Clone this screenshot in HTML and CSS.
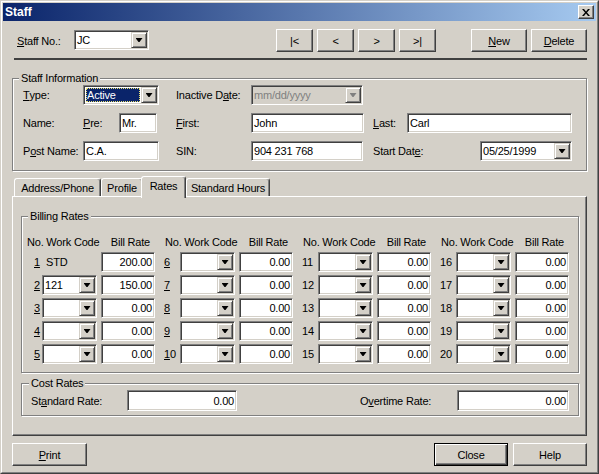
FILE: index.html
```html
<!DOCTYPE html>
<html lang="en">
<head>
    <meta charset="UTF-8">
    <title>Staff</title>
    <link rel="stylesheet" href="styles.css">
</head>
<body>

<div class="window">
  <div class="window-inner">
    <div class="titlebar">
        <span class="title">Staff</span>
        <span class="close-btn">
            <svg width="8" height="7" viewBox="0 0 8 7"><path d="M0 0h2l2 2.4L6 0h2L5 3.5 8 7H6L4 4.6 2 7H0l3-3.5z" fill="#000"/></svg>
        </span>
    </div>

    <div class="client">
        <!-- staff selector + navigation -->
        <div class="toolbar">
            <span class="toolbar-label"><u>S</u>taff No.:</span>
            <div class="combo staff-combo"><span class="combo-text">JC</span><span class="drop"></span></div>
            <div class="nav">
                <button class="btn nav-btn">|&lt;</button>
                <button class="btn nav-btn">&lt;</button>
                <button class="btn nav-btn">&gt;</button>
                <button class="btn nav-btn">&gt;|</button>
            </div>
            <button class="btn wide-btn"><u>N</u>ew</button>
            <button class="btn wide-btn delete-btn"><u>D</u>elete</button>
        </div>
        <div class="separator"></div>

        <fieldset class="group info">
            <legend>Staff Information</legend>
            <div class="info-grid">
                <span class="lbl col1"><u>T</u>ype:</span>
                <div class="combo focused span2"><span class="combo-text">Active</span><span class="drop"></span></div>
                <span class="lbl col5">Inactive D<u>a</u>te:</span>
                <div class="combo disabled w112"><span class="combo-text">mm/dd/yyyy</span><span class="drop"></span></div>

                <span class="lbl col1">Name:</span>
                <span class="lbl"><u>P</u>re:</span>
                <span class="field w38">Mr.</span>
                <span class="lbl col5"><u>F</u>irst:</span>
                <span class="field">John</span>
                <span class="lbl col8"><u>L</u>ast:</span>
                <span class="field span2">Carl</span>

                <span class="lbl col1">P<u>o</u>st Name:</span>
                <span class="field span2">C.A.</span>
                <span class="lbl col5">SIN:</span>
                <span class="field w112">904 231 768</span>
                <span class="lbl col8 span2">Start Dat<u>e</u>:</span>
                <div class="combo"><span class="combo-text">05/25/1999</span><span class="drop"></span></div>
            </div>
        </fieldset>

        <div class="tabs">
            <span class="tab tab-address">Address/Phone</span>
            <span class="tab tab-profile">Profile</span>
            <span class="tab tab-rates active">Rates</span>
            <span class="tab tab-hours">Standard Hours</span>
        </div>
        <div class="tab-panel">
            <fieldset class="group billing">
                <legend>Billing Rates</legend>
                <div class="rates">
                    <div class="rate-col first">
                        <span class="rate-head">No. Work Code</span>
                        <span class="rate-head bill-head">Bill Rate</span>
                        <span class="num"><u>1</u></span><span class="code-text">STD</span><span class="field bill">200.00</span>
                        <span class="num"><u>2</u></span><div class="combo"><span class="combo-text">121</span><span class="drop"></span></div><span class="field bill">150.00</span>
                        <span class="num"><u>3</u></span><div class="combo"><span class="combo-text"></span><span class="drop"></span></div><span class="field bill">0.00</span>
                        <span class="num"><u>4</u></span><div class="combo"><span class="combo-text"></span><span class="drop"></span></div><span class="field bill">0.00</span>
                        <span class="num"><u>5</u></span><div class="combo"><span class="combo-text"></span><span class="drop"></span></div><span class="field bill">0.00</span>
                    </div>
                    <div class="rate-col">
                        <span class="rate-head">No. Work Code</span>
                        <span class="rate-head bill-head">Bill Rate</span>
                        <span class="num"><u>6</u></span><div class="combo"><span class="combo-text"></span><span class="drop"></span></div><span class="field bill">0.00</span>
                        <span class="num"><u>7</u></span><div class="combo"><span class="combo-text"></span><span class="drop"></span></div><span class="field bill">0.00</span>
                        <span class="num"><u>8</u></span><div class="combo"><span class="combo-text"></span><span class="drop"></span></div><span class="field bill">0.00</span>
                        <span class="num"><u>9</u></span><div class="combo"><span class="combo-text"></span><span class="drop"></span></div><span class="field bill">0.00</span>
                        <span class="num"><u>1</u>0</span><div class="combo"><span class="combo-text"></span><span class="drop"></span></div><span class="field bill">0.00</span>
                    </div>
                    <div class="rate-col">
                        <span class="rate-head">No. Work Code</span>
                        <span class="rate-head bill-head">Bill Rate</span>
                        <span class="num">11</span><div class="combo"><span class="combo-text"></span><span class="drop"></span></div><span class="field bill">0.00</span>
                        <span class="num">12</span><div class="combo"><span class="combo-text"></span><span class="drop"></span></div><span class="field bill">0.00</span>
                        <span class="num">13</span><div class="combo"><span class="combo-text"></span><span class="drop"></span></div><span class="field bill">0.00</span>
                        <span class="num">14</span><div class="combo"><span class="combo-text"></span><span class="drop"></span></div><span class="field bill">0.00</span>
                        <span class="num">15</span><div class="combo"><span class="combo-text"></span><span class="drop"></span></div><span class="field bill">0.00</span>
                    </div>
                    <div class="rate-col">
                        <span class="rate-head">No. Work Code</span>
                        <span class="rate-head bill-head">Bill Rate</span>
                        <span class="num">16</span><div class="combo"><span class="combo-text"></span><span class="drop"></span></div><span class="field bill">0.00</span>
                        <span class="num">17</span><div class="combo"><span class="combo-text"></span><span class="drop"></span></div><span class="field bill">0.00</span>
                        <span class="num">18</span><div class="combo"><span class="combo-text"></span><span class="drop"></span></div><span class="field bill">0.00</span>
                        <span class="num">19</span><div class="combo"><span class="combo-text"></span><span class="drop"></span></div><span class="field bill">0.00</span>
                        <span class="num">20</span><div class="combo"><span class="combo-text"></span><span class="drop"></span></div><span class="field bill">0.00</span>
                    </div>
                </div>
            </fieldset>

            <fieldset class="group cost">
                <legend>Cost Rates</legend>
                <div class="cost-row">
                    <span class="lbl std-label">St<u>a</u>ndard Rate:</span>
                    <span class="field bill std-field">0.00</span>
                    <span class="lbl ot-label">O<u>v</u>ertime Rate:</span>
                    <span class="field bill ot-field">0.00</span>
                </div>
            </fieldset>
        </div>

        <div class="footer">
            <button class="btn print-btn"><u>P</u>rint</button>
            <button class="btn foot-btn default">Close</button>
            <button class="btn foot-btn help-btn">Help</button>
        </div>
    </div>
  </div>
</div>

</body>
</html>
```

FILE: styles.css
```css
* {
    box-sizing: border-box;
}

body {
    margin: 0;
    background-color: #d4d0c8;
    font-family: "Liberation Sans", Arial, sans-serif;
    font-size: 11px;
    letter-spacing: -0.2px;
    color: #000;
}

u {
    text-decoration: underline;
    text-underline-offset: 1px;
}

/* window frame */
.window {
    width: 599px;
    height: 474px;
    border: 1px solid;
    border-color: #d4d0c8 #404040 #404040 #d4d0c8;
    background-color: #d4d0c8;
}

.window-inner {
    height: 100%;
    display: flex;
    flex-direction: column;
    border: 1px solid;
    border-color: #fff #808080 #808080 #fff;
    padding: 1px;
}

.titlebar {
    height: 18px;
    display: flex;
    align-items: center;
    padding: 0 2px;
    background: linear-gradient(to right, #0a246a, #a6caf0);
    color: #fff;
    font-weight: bold;
    font-size: 12px;
    letter-spacing: 0;
}

.title {
    flex: 1;
}

.close-btn {
    width: 16px;
    height: 14px;
    display: flex;
    align-items: center;
    justify-content: center;
    background-color: #d4d0c8;
    border: 1px solid;
    border-color: #fff #404040 #404040 #fff;
    box-shadow: inset -1px -1px 0 #808080;
}

.client {
    flex: 1;
    display: flex;
    flex-direction: column;
    padding: 0 9px;
}

/* buttons */
.btn {
    height: 23px;
    padding: 0;
    font: inherit;
    letter-spacing: inherit;
    color: #000;
    background-color: #d4d0c8;
    border: 1px solid;
    border-color: #fff #404040 #404040 #fff;
    box-shadow: inset -1px -1px 0 #808080;
}

.btn.default {
    border-color: #000;
    box-shadow: inset 1px 1px 0 #fff, inset -1px -1px 0 #404040, inset -2px -2px 0 #808080;
}

/* sunken edit box */
.field {
    height: 20px;
    display: flex;
    align-items: center;
    padding: 0 2px 0 2px;
    white-space: nowrap;
    overflow: hidden;
    background-color: #fff;
    border: 1px solid;
    border-color: #808080 #fff #fff #808080;
    box-shadow: inset 1px 1px 0 #404040, inset -1px -1px 0 #d4d0c8;
}

.combo {
    height: 20px;
    display: flex;
    padding: 1px;
    background-color: #fff;
    border: 1px solid;
    border-color: #808080 #fff #fff #808080;
    box-shadow: inset 1px 1px 0 #404040, inset -1px -1px 0 #d4d0c8;
}

.combo-text {
    flex: 1;
    display: flex;
    align-items: center;
    padding-left: 1px;
    white-space: nowrap;
    overflow: hidden;
}

.drop {
    width: 16px;
    height: 16px;
    flex: none;
    display: flex;
    align-items: center;
    justify-content: center;
    background-color: #d4d0c8;
    border: 1px solid;
    border-color: #d4d0c8 #404040 #404040 #d4d0c8;
    box-shadow: inset 1px 1px 0 #fff, inset -1px -1px 0 #808080;
}

.drop::after {
    content: '';
    width: 7px;
    height: 4px;
    background-color: #000;
    clip-path: polygon(0 0, 7px 0, 4px 4px, 3px 4px);
}

.combo.focused .combo-text {
    margin: 1px;
    background-color: #0a246a;
    color: #fff;
    outline: 1px dotted #e8e070;
    outline-offset: -1px;
}

.combo.disabled {
    background-color: #d4d0c8;
    color: #808080;
}

.combo.disabled .drop::after {
    background-color: #808080;
}

/* toolbar */
.toolbar {
    height: 23px;
    display: flex;
    align-items: flex-start;
    margin-top: 8px;
    padding-left: 5px;
}

.toolbar-label {
    width: 57px;
    height: 23px;
    display: flex;
    align-items: center;
}

.staff-combo {
    width: 75px;
    margin-top: 1px;
}

.nav {
    display: flex;
    gap: 4px;
    margin-left: auto;
    margin-right: 35px;
}

.nav-btn {
    width: 37px;
}

.wide-btn {
    width: 56px;
}

.delete-btn {
    margin-left: 4px;
}

.separator {
    height: 2px;
    margin: 6px 0 0 2px;
    background-color: #404040;
}

/* group boxes */
.group {
    margin: 0;
    min-width: 0;
    border: 1px solid #808080;
    box-shadow: 1px 1px 0 #fff, inset 1px 1px 0 #fff;
}

.group legend {
    padding: 0 2px;
    line-height: 13px;
    background-color: #d4d0c8;
}

.info {
    margin-top: 12px;
    padding: 0 10px 9px;
}

.info legend {
    margin-left: -4px;
}

.info-grid {
    display: grid;
    grid-template-columns: 60px 36px 40px 17px 75px 113px 9px 34px 73px 92px;
    grid-template-rows: repeat(3, 20px);
    row-gap: 8px;
}

.lbl {
    display: flex;
    align-items: center;
    white-space: nowrap;
}

.span2 {
    grid-column-end: span 2;
}

.col1 {
    grid-column-start: 1;
}

.col5 {
    grid-column-start: 5;
}

.col8 {
    grid-column-start: 8;
}

.w38 {
    width: 38px;
}

.w112 {
    width: 112px;
}

/* tabs */
.tabs {
    height: 20px;
    display: flex;
    align-items: flex-end;
    margin-top: 5px;
    padding-left: 2px;
}

.tab {
    height: 18px;
    display: flex;
    align-items: center;
    justify-content: center;
    border: 1px solid;
    border-bottom: 0;
    border-color: #fff #404040 transparent #fff;
    border-radius: 3px 3px 0 0;
    box-shadow: inset -1px 0 0 #808080;
    white-space: nowrap;
}

.tab-address {
    width: 87px;
}

.tab-profile {
    width: 42px;
}

.tab-rates {
    width: 45px;
}

.tab-hours {
    width: 84px;
}

.tab.active {
    position: relative;
    z-index: 1;
    height: 22px;
    margin-left: -2px;
    margin-bottom: -2px;
    padding-bottom: 3px;
    background-color: #d4d0c8;
}

.tab-panel {
    height: 240px;
    padding: 13px 7px 0 8px;
    border: 1px solid;
    border-color: #fff #404040 #404040 #fff;
    box-shadow: inset -1px -1px 0 #808080;
}

.billing {
    padding: 13px 0 8px 4px;
}

.billing legend {
    margin-left: 2px;
}

.rates {
    display: flex;
    gap: 9px;
}

.rate-col {
    display: grid;
    grid-template-columns: 16px 55px 58px;
    grid-template-rows: 13px repeat(5, 20px);
    row-gap: 3px;
}

.rate-head {
    grid-column: 1 / 3;
    white-space: nowrap;
    line-height: 13px;
    padding-left: 1px;
}

.rate-head.bill-head {
    grid-column: 3;
    text-align: right;
    padding-right: 5px;
}

.num {
    display: flex;
    align-items: center;
}

.first .num {
    padding-left: 8px;
}

.code-text {
    display: flex;
    align-items: center;
    padding-left: 4px;
}

.field.bill {
    justify-content: flex-end;
}

.rate-col .field.bill {
    width: 54px;
    margin-left: 4px;
}

.cost {
    margin-top: 4px;
    padding: 0 9px 4px;
}

.cost legend {
    margin-left: -2px;
}

.cost-row {
    height: 21px;
    display: flex;
}

.cost-row .field {
    height: 21px;
}

.std-label {
    width: 96px;
}

.std-field {
    width: 110px;
}

.ot-label {
    width: 97px;
    margin-left: auto;
}

.ot-field {
    width: 112px;
}

/* bottom buttons */
.footer {
    display: flex;
    margin-top: 7px;
}

.print-btn {
    width: 75px;
}

.foot-btn {
    width: 74px;
}

.default {
    margin-left: auto;
}

.help-btn {
    margin-left: 5px;
}
```
